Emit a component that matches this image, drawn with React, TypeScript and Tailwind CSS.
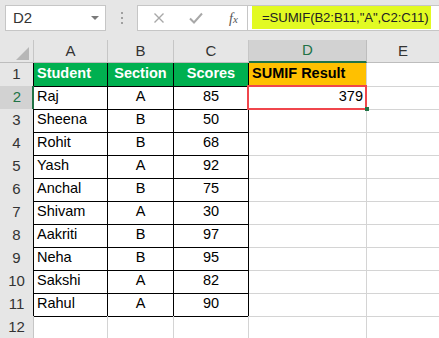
import React from "react";

type Row = { name: string; section: string; score: string };

const rows: Row[] = [
  { name: "Raj", section: "A", score: "85" },
  { name: "Sheena", section: "B", score: "50" },
  { name: "Rohit", section: "B", score: "68" },
  { name: "Yash", section: "A", score: "92" },
  { name: "Anchal", section: "B", score: "75" },
  { name: "Shivam", section: "A", score: "30" },
  { name: "Aakriti", section: "B", score: "97" },
  { name: "Neha", section: "B", score: "95" },
  { name: "Sakshi", section: "A", score: "82" },
  { name: "Rahul", section: "A", score: "90" },
];

const gridCols = "grid grid-cols-[34px_74px_66px_75px_118px_73px_1fr]";
const font = { fontFamily: '"Liberation Sans", Arial, sans-serif' };

function ColHeader({ label, selected }: { label: string; selected?: boolean }) {
  return (
    <div
      className={
        selected
          ? "h-[23px] bg-[#d2d2d2] border-r border-r-[#bdbdbd] border-b-2 border-b-[#217346] flex items-center justify-center text-[#217346] text-[15px]"
          : "h-[23px] border-r border-[#c6c6c6] border-b border-b-[#bdbdbd] flex items-center justify-center text-[#333] text-[15px]"
      }
    >
      {label}
    </div>
  );
}

function RowHeader({ n, selected, table }: { n: number; selected?: boolean; table?: boolean }) {
  if (selected) {
    return (
      <div className="bg-[#d2d2d2] border-r-2 border-r-[#217346] border-b border-b-[#c6c6c6] flex items-center justify-center pl-[2px] text-[#217346] text-[15px]">
        {n}
      </div>
    );
  }
  return (
    <div
      className={`bg-[#e6e6e6] border-b border-b-[#c6c6c6] border-r flex items-center justify-center text-[#333] text-[15px] ${
        table ? "border-r-black" : "border-r-[#c6c6c6]"
      }`}
    >
      {n}
    </div>
  );
}

export default function App() {
  return (
    <div className="w-[439px] h-[338px] overflow-hidden bg-white" style={font}>
      {/* formula bar area */}
      <div className="h-[40px] bg-[#e6e6e6] flex items-start pt-[5px] pl-[5px]">
        <div className="w-[101px] h-[26px] bg-white border border-[#c6c6c6] flex items-center justify-between pl-[7px] pr-[6px]">
          <span className="text-[15px] text-[#333]">D2</span>
          <span className="w-0 h-0 border-l-[4px] border-r-[4px] border-t-[4px] border-l-transparent border-r-transparent border-t-[#7a7a7a]" />
        </div>
        <div className="w-[31px] h-[26px] flex flex-col items-center justify-center gap-[3px]">
          <span className="w-[2px] h-[2px] bg-[#a0a0a0]" />
          <span className="w-[2px] h-[2px] bg-[#a0a0a0]" />
          <span className="w-[2px] h-[2px] bg-[#a0a0a0]" />
        </div>
        <div className="flex-1 h-[26px] bg-white border border-r-0 border-[#c6c6c6] flex">
          <div className="w-[110px] border-r border-[#c6c6c6] flex items-center">
            <svg width="12" height="12" viewBox="0 0 12 12" className="ml-[15px]">
              <path d="M1.5 1.5L10.5 10.5M10.5 1.5L1.5 10.5" stroke="#a8a8a8" strokeWidth="1.4" />
            </svg>
            <svg width="14" height="12" viewBox="0 0 14 12" className="ml-[24px]">
              <path d="M1 6.5L5 10.5L13 1.5" stroke="#a8a8a8" strokeWidth="2" fill="none" />
            </svg>
            <span
              className="ml-[26px] text-[14px] italic text-[#555]"
              style={{ fontFamily: '"Liberation Serif", "Times New Roman", serif' }}
            >
              f<span className="text-[11px]">x</span>
            </span>
          </div>
          <div className="flex-1 pl-[4px] pr-[8px] pb-[1px]">
            <div className="h-full bg-[#e2fa22] flex items-center pl-[10px] text-[13.2px] text-[#222] tracking-[-0.1px] whitespace-nowrap">
              =SUMIF(B2:B11,"A",C2:C11)
            </div>
          </div>
        </div>
      </div>

      {/* column headers */}
      <div className={`${gridCols} bg-[#e6e6e6]`}>
        <div className="h-[23px] border-r border-[#c6c6c6] border-b border-b-[#bdbdbd] relative">
          <svg width="34" height="23" viewBox="0 0 34 23" className="absolute inset-0">
            <path d="M16 20L29 20L29 7Z" fill="#b7b7b7" />
          </svg>
        </div>
        <ColHeader label="A" />
        <ColHeader label="B" />
        <ColHeader label="C" />
        <ColHeader label="D" selected />
        <ColHeader label="E" />
        <div className="h-[23px] border-b border-b-[#bdbdbd]" />
      </div>

      {/* row 1 */}
      <div className={`${gridCols} h-[23px] text-[14.5px]`}>
        <RowHeader n={1} table />
        <div className="bg-[#00b050] border-r border-b border-black text-white font-bold flex items-center pl-[3px]">
          Student
        </div>
        <div className="bg-[#00b050] border-r border-b border-black text-white font-bold flex items-center justify-center">
          Section
        </div>
        <div className="bg-[#00b050] border-r border-b border-black text-white font-bold flex items-center justify-center">
          Scores
        </div>
        <div className="bg-[#ffc000] border-r border-b border-[#d4d4d4] text-black font-bold flex items-center pl-[3px]">
          SUMIF Result
        </div>
        <div className="border-r border-b border-[#d4d4d4]" />
        <div className="border-b border-[#d4d4d4]" />
      </div>

      {/* data rows */}
      {rows.map((r, i) => {
        const n = i + 2;
        return (
          <div key={n} className={`${gridCols} h-[23px] text-[14.5px] text-black`}>
            <RowHeader n={n} selected={n === 2} table />
            <div className="border-r border-b border-black flex items-center pl-[3px]">{r.name}</div>
            <div className="border-r border-b border-black flex items-center justify-center">{r.section}</div>
            <div className="border-r border-b border-black flex items-center justify-center">{r.score}</div>
            {n === 2 ? (
              <div className="relative border-r border-b border-[#d4d4d4] flex items-center justify-end pr-[3px]">
                379
                <div className="absolute -left-[2px] -top-[1px] -right-[1px] -bottom-[1px] border-2 border-[#f0464c]" />
                <div className="absolute -right-[3px] -bottom-[2px] w-[4px] h-[4px] bg-[#217346]" />
              </div>
            ) : (
              <div className="border-r border-b border-[#d4d4d4]" />
            )}
            <div className="border-r border-b border-[#d4d4d4]" />
            <div className="border-b border-[#d4d4d4]" />
          </div>
        );
      })}

      {/* row 12 */}
      <div className={`${gridCols} h-[23px]`}>
        <RowHeader n={12} />
        <div className="border-r border-b border-[#d4d4d4]" />
        <div className="border-r border-b border-[#d4d4d4]" />
        <div className="border-r border-b border-[#d4d4d4]" />
        <div className="border-r border-b border-[#d4d4d4]" />
        <div className="border-r border-b border-[#d4d4d4]" />
        <div className="border-b border-[#d4d4d4]" />
      </div>
    </div>
  );
}
